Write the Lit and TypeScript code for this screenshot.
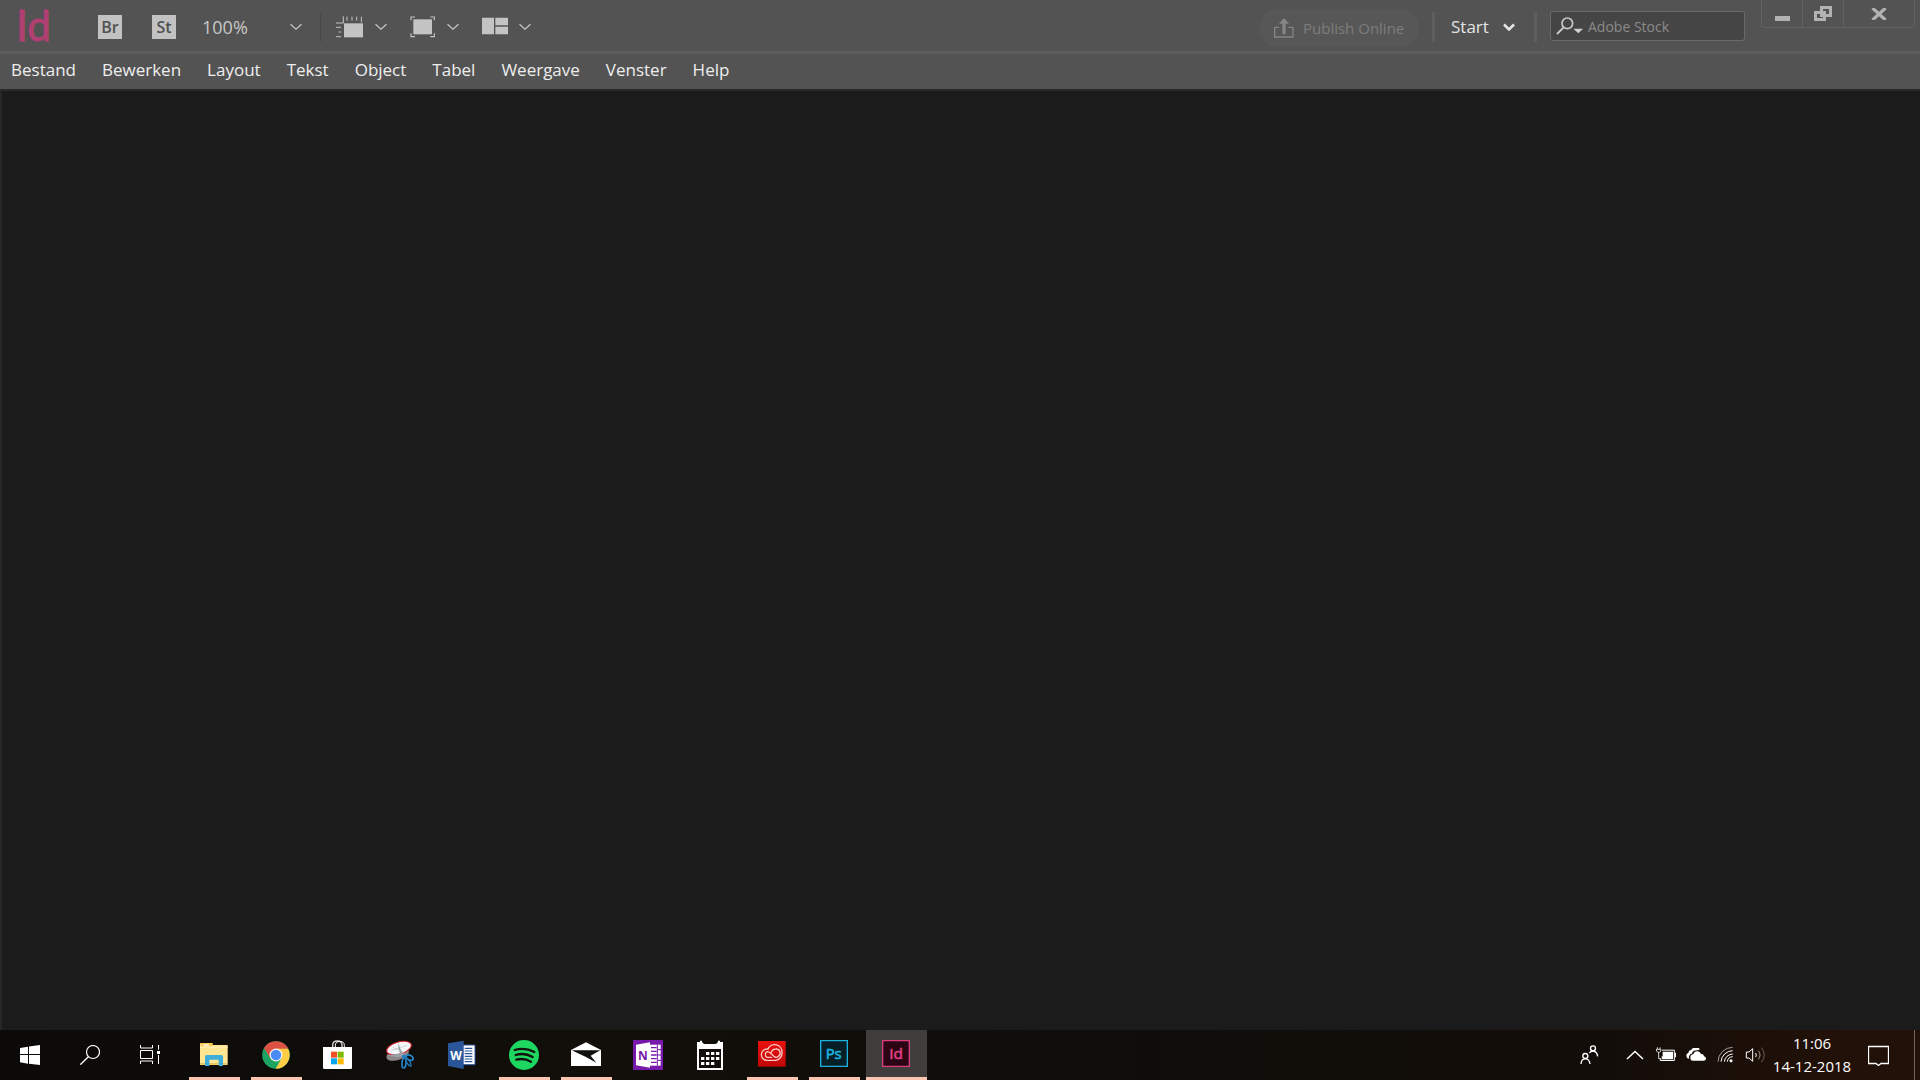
import { LitElement, html, svg, css, type SVGTemplateResult } from "lit";
import { customElement, property } from "lit/decorators.js";
import { classMap } from "lit/directives/class-map.js";

interface TaskItem {
  label: string;
  running?: boolean;
  active?: boolean;
  box: string;
  art: SVGTemplateResult;
}

const MENUS = ["Bestand", "Bewerken", "Layout", "Tekst", "Object", "Tabel", "Weergave", "Venster", "Help"];

const chevron = html`<svg class="chevron" width="14" height="8" viewBox="0 0 14 8" aria-hidden="true">
  <path d="M1.5 1.2L7 6.2L12.5 1.2" fill="none" stroke="#c4c4c4" stroke-width="1.3" />
</svg>`;

const TASKS: TaskItem[] = [
  {
    label: "Verkenner",
    running: true,
    box: "597 60 90 90",
    art: svg`<path d="M600 72q0-3 3-3h34v6h46v56h-83z" fill="#ffe693"/>
      <path d="M603 69h36l-4 10h-32z" fill="#f7c948"/><path d="M610 73h17v4h-17z" fill="#fff"/>
      <path d="M600 80h83v3h-83z" fill="#fff0b8"/>
      <path d="M600 130h83v5h-83z" fill="#f5cf66"/>
      <path d="M615 138v-28q0-5 5-5h44q5 0 5 5v28h-13v-19h-28v19z" fill="#3daedb"/>`,
  },
  {
    label: "Google Chrome",
    running: true,
    box: "783 60 90 90",
    art: svg`<circle cx="828" cy="105" r="41.5" fill="#1da462"/>
      <path d="M828 105L792 84.3A41.5 41.5 0 0 1 864 84.3z" fill="#dd5144"/>
      <path d="M792 84.3L811 115L828 86z" fill="#dd5144"/>
      <path d="M828 86H864.5A41.5 41.5 0 0 1 827 146.500L845 114z" fill="#ffcd46"/>
      <circle cx="828" cy="105" r="19.5" fill="#f3f3f3"/><circle cx="828" cy="105" r="15.5" fill="#4a8af4"/>`,
  },
  {
    label: "Microsoft Store",
    box: "69 60 90 90",
    art: svg`<path d="M98 82v-7q0-12 14-12t14 12v7" fill="none" stroke="#d8d8d8" stroke-width="4"/>
      <path d="M106 82v-6q0-10 13-12q14 0 14 12v6" fill="none" stroke="#fff" stroke-width="3"/>
      <path d="M69 81h87v62q0 4-4 4h-79q-4 0-4-4z" fill="#fff"/>
      <path d="M93 95h18v18h-18z" fill="#f25022"/><path d="M113 95h18v18h-18z" fill="#7fba00"/>
      <path d="M93 115h18v18h-18z" fill="#00a4ef"/><path d="M113 115h18v18h-18z" fill="#ffb900"/>`,
  },
  {
    label: "Knipprogramma",
    box: "255 60 90 90",
    art: svg`<ellipse cx="293" cy="103" rx="35" ry="17" transform="rotate(-18 293 103)" fill="#8d8588"/>
      <ellipse cx="297" cy="84" rx="38" ry="18" transform="rotate(-16 297 84)" fill="#f5f6f8" stroke="#d9242b" stroke-width="3"/>
      <path d="M275 91L321 76M278 82L312 97" stroke="#bcc3ca" stroke-width="2"/>
      <path d="M294 70L311 108L304 110L296 88zM262 106L309 100L313 107L292 112z" fill="#9aa2a9"/>
      <path d="M306 109L320 109" stroke="#1c7fc0" stroke-width="7"/>
      <ellipse cx="329" cy="113" rx="11" ry="7" transform="rotate(28 329 113)" fill="none" stroke="#2389cf" stroke-width="5"/>
      <ellipse cx="312" cy="129" rx="6" ry="15" transform="rotate(6 312 129)" fill="none" stroke="#2389cf" stroke-width="5"/>
      <path d="M317 113Q334 124 333 138Q322 138 315 114" fill="none" stroke="#1e78b8" stroke-width="4"/>`,
  },
  {
    label: "Word",
    box: "441 60 90 90",
    art: svg`<path d="M488 75h37v59h-37z" fill="#fff" stroke="#2b579a" stroke-width="3"/>
      <path d="M494 85h23M494 93h23M494 101h23M494 109h23M494 117h23M494 125h23" stroke="#2b579a" stroke-width="3.5"/>
      <path d="M444 70L491 62V147L444 138z" fill="#2b579a"/>
      <text x="468" y="119" text-anchor="middle" font-size="36" font-weight="700" font-family="Open Sans, sans-serif" fill="#fff">W</text>`,
  },
  {
    label: "Spotify",
    running: true,
    box: "627 60 90 90",
    art: svg`<circle cx="672" cy="105" r="45" fill="#1ed760"/>
      <path d="M644 90Q675 81 703 96M647 105Q674 97 698 111M649 119Q673 113 693 125" fill="none" stroke="#12110c" stroke-width="7" stroke-linecap="round"/>`,
  },
  {
    label: "Mail",
    running: true,
    box: "813 60 90 90",
    art: svg`<path d="M813 90L858 67L903 90V138H813z" fill="#fff"/>
      <path d="M815 91H901L872 107L889 128L858 111z" fill="#100f0b"/>`,
  },
  {
    label: "OneNote",
    box: "69 60 90 90",
    art: svg`<path d="M69 60h90v90h-90z" fill="#7719aa"/>
      <path d="M119 74h33v63h-33z" fill="#fff"/>
      <path d="M123 83h17M123 94h17M123 105h17M123 116h17M123 127h17" stroke="#7719aa" stroke-width="4"/>
      <path d="M142 74v63M142 89h11M142 105h11M142 121h11" stroke="#7719aa" stroke-width="3"/>
      <path d="M78 74L120 67V143L78 136z" fill="#fff"/>
      <text x="99" y="119" text-anchor="middle" font-size="36" font-weight="700" font-family="Open Sans, sans-serif" fill="#7719aa">N</text>`,
  },
  {
    label: "Agenda",
    box: "255 60 90 90",
    art: svg`<path d="M261 66h9v-4h6v4l6 6h36l6-6v-4h6v4h9v84h-78zM267 87v57h66v-57z" fill="#fff" fill-rule="evenodd"/>
      <path d="M288 96h10v9h-10zM303 96h10v9h-10zM318 96h10v9h-10zM273 111h10v9h-10zM288 111h10v9h-10zM303 111h10v9h-10zM318 111h10v9h-10zM273 126h10v9h-10zM288 126h10v9h-10zM303 126h10v9h-10z" fill="#fff"/>`,
  },
  {
    label: "Creative Cloud",
    running: true,
    box: "441 60 90 90",
    art: svg`<defs><linearGradient id="cc" x1="0" y1="0" x2="0" y2="1"><stop offset="0" stop-color="#e8100c"/><stop offset="1" stop-color="#c00508"/></linearGradient></defs>
      <path d="M444 63h83v77h-83z" fill="url(#cc)"/>
      <g fill="none" stroke="#ffc9c4" stroke-width="4" stroke-linecap="round">
      <path d="M498 121H471A17 17 0 0 1 471 87H474A22 22 0 0 1 516 97A22 22 0 0 1 496 121"/>
      <path d="M485 112H472A9 9 0 0 1 472 95Q477 95 481 99L493 110Q500 115 505 109A12 12 0 0 0 498 87Q487 87 484 97"/>
      </g>`,
  },
  {
    label: "Photoshop",
    running: true,
    box: "627 60 90 90",
    art: svg`<path d="M632 62h80v77h-80z" fill="#061e26" stroke="#1bb0dd" stroke-width="4"/>
      <text x="671" y="117" text-anchor="middle" font-size="44" font-family="Open Sans, sans-serif" fill="#1bb0dd" stroke="#1bb0dd" stroke-width="2">Ps</text>`,
  },
  {
    label: "InDesign",
    running: true,
    active: true,
    box: "813 60 90 90",
    art: svg`<path d="M818 62h80v77h-80z" fill="#2b0514" stroke="#dc3f7f" stroke-width="4"/>
      <text x="858" y="117" text-anchor="middle" font-size="46" font-family="Open Sans, sans-serif" fill="#dc3f7f" stroke="#dc3f7f" stroke-width="2">Id</text>`,
  },
];

@customElement("app-toolbar")
export class AppToolbar extends LitElement {
  static styles = css`
    :host { display: flex; height: 51px; color: #d2d2d2; font-family: "Open Sans", "Noto Sans", sans-serif; }
    button { appearance: none; border: 0; background: none; padding: 0; margin: 0; font: inherit; color: inherit; display: flex; align-items: center; }
    svg { display: block; flex: none; }
    .left { display: flex; align-items: center; flex: 1; padding: 3px 0 0 16px; }
    .logo { width: 82px; font: 42px/44px "Lato", sans-serif; color: #b03f72; -webkit-text-stroke: 1px #b03f72; margin: 0 0 4px; }
    .badge { width: 24px; height: 24px; background: #c2c2c2; color: #515151; font-size: 16px; line-height: 24px; font-weight: 600; justify-content: center; margin-right: 30px; }
    .drop { display: grid; align-items: center; }
    .drop > * { grid-area: 1 / 1; }
    .drop > .chevron, .drop > svg { justify-self: end; pointer-events: none; }
    select { appearance: none; border: 0; background: transparent; color: inherit; font: inherit; padding: 0; margin: 0; width: 100%; }
    .zoom { width: 101px; font-size: 18px; color: #c8c8c8; margin-left: -4px; }
    .rule { width: 1px; height: 30px; background: #4a4a4a; margin: 0 15px 0 17px; }
    .tool { gap: 10px; margin-right: 22px; }
    .right { display: flex; align-items: flex-start; }
    .publish { height: 38px; margin-top: 9px; width: 160px; border-radius: 19px; background: #575757; color: #7d7d7d; font-size: 15px; gap: 9px; padding-left: 15px; box-sizing: border-box; white-space: nowrap; }
    .bar { width: 3px; height: 30px; background: #5e5e5e; margin: 12px 0 0 13px; }
    .start { width: 64px; height: 28px; margin: 12px 3px 0 16px; font-size: 17px; color: #e4e4e4; }
    .bar.second { margin-left: 16px; }
    .search { display: flex; align-items: center; box-sizing: border-box; width: 195px; height: 30px; margin: 11px 16px 0 13px; border: 1px solid #6a6a6a; border-radius: 3px; background: #454545; padding-left: 5px; gap: 4px; }
    input { flex: 1; min-width: 0; border: 0; outline: 0; background: none; color: #ddd; font: 14px "Open Sans", sans-serif; padding: 0; }
    input::placeholder { color: #8b8b8b; opacity: 1; }
    .window { display: flex; height: 28px; box-sizing: border-box; border: 1px solid #626262; border-top: 0; border-radius: 0 0 4px 4px; margin-right: 5px; }
    .window button { width: 41px; justify-content: center; border-right: 1px solid #626262; box-sizing: border-box; }
    .window button.close { width: 70px; border: 0; }
  `;

  render() {
    return html`
      <div class="left">
        <h1 class="logo">Id</h1>
        <button class="badge" aria-label="Bridge">Br</button>
        <button class="badge" aria-label="Stock">St</button>
        <div class="drop zoom">
          <select aria-label="Zoompercentage"><option>100%</option></select>
          ${chevron}
        </div>
        <span class="rule"></span>
        <button class="tool" aria-label="Weergaveopties">
          <svg width="28" height="22" viewBox="108 50 84 66"><path d="M132 72h57v42h-57z" fill="#c4c4c4" /><path d="M108 71h22V51M141 52v12M156 52v12M170 52v12M184 52v17M108 84h15M116 98h8M108 112h15" fill="none" stroke="#c4c4c4" stroke-width="3" /></svg>
          ${chevron}
        </button>
        <button class="tool" aria-label="Schermmodus">
          <svg width="26" height="22" viewBox="327 50 78 66"><path d="M337 60h56v45h-56z" fill="#c4c4c4" /><path d="M330 63V53h12M388 53h12v10M400 102v10h-12M342 112h-12v-10" fill="none" stroke="#c4c4c4" stroke-width="3.5" /></svg>
          ${chevron}
        </button>
        <button class="tool" aria-label="Documenten schikken">
          <svg width="26" height="22" viewBox="540 50 78 66"><path d="M540 55h36v50h-36zM580 55h38v23h-38zM580 82h38v23h-38z" fill="#c4c4c4" /></svg>
          ${chevron}
        </button>
      </div>
      <div class="right">
        <button class="publish">
          <svg width="20" height="20" viewBox="104 52 60 60"><path d="M120 80h-14v29h55v-29h-14" fill="none" stroke="#858585" stroke-width="4" /><path d="M134 52l15 17h-10v32h-10V69h-10z" fill="#858585" /></svg>
          Publish Online
        </button>
        <span class="bar"></span>
        <div class="drop start">
          <select aria-label="Werkruimte"><option>Start</option></select>
          <svg width="12" height="9" viewBox="0 0 12 9"><path d="M1 2.500L6 7.500L11 2.500" fill="none" stroke="#e6e6e6" stroke-width="2.5" /></svg>
        </div>
        <span class="bar second"></span>
        <label class="search">
          <svg width="28" height="20" viewBox="78 48 84 60"><circle cx="112" cy="70" r="16" fill="none" stroke="#c8c8c8" stroke-width="5" /><path d="M101 82L81 102" stroke="#c8c8c8" stroke-width="6" /><path d="M130 86h29l-14 14z" fill="#d0d0d0" /></svg>
          <input type="search" placeholder="Adobe Stock" aria-label="Adobe Stock" />
        </label>
        <div class="window">
          <button aria-label="Minimaliseren"><svg width="15" height="20" viewBox="0 0 15 20"><path d="M0 12h15v5H0z" fill="#b2b2b2" /></svg></button>
          <button aria-label="Verkleinen"><svg width="18" height="16" viewBox="0 0 18 16"><path d="M7.5 1.5h9v8h-9zM1.5 6.5h9v7h-9z" fill="#535353" stroke="#b2b2b2" stroke-width="3" /><path d="M9 6v2M6 8h3" stroke="#b2b2b2" stroke-width="1" /></svg></button>
          <button class="close" aria-label="Sluiten"><svg width="16" height="12" viewBox="0 0 16 12"><path d="M1.5 0L14.5 12M14.5 0L1.5 12" stroke="#b2b2b2" stroke-width="3.2" /></svg></button>
        </div>
      </div>
    `;
  }
}

@customElement("app-menubar")
export class AppMenubar extends LitElement {
  static styles = css`
    :host { display: block; height: 35px; border-top: 3px solid #5d5d5d; font-family: "Open Sans", "Noto Sans", sans-serif; }
    nav { display: flex; height: 32px; margin-left: -2px; }
    button { appearance: none; border: 0; background: none; margin: 0; padding: 0 13px; font: inherit; font-size: 17px; line-height: 32px; color: #eee; }
  `;

  render() {
    return html`<nav aria-label="Menu">${MENUS.map((name) => html`<button>${name}</button>`)}</nav>`;
  }
}

@customElement("task-button")
export class TaskButton extends LitElement {
  @property({ attribute: false }) item!: TaskItem;

  static styles = css`
    :host { display: flex; width: 62px; }
    button { appearance: none; flex: 1; display: grid; place-items: center; position: relative; border: 0; padding: 0 1px 0 0; margin: 0 0 0 1px; background: none; }
    svg { display: block; }
    .active { background: #3f3e3d; }
    .mark { position: absolute; bottom: 0; left: 5px; right: 5px; height: 3px; background: #fbc5b2; }
    .active .mark { left: 0; right: 0; }
  `;

  render() {
    const { label, box, art, running, active } = this.item;
    return html`<button aria-label=${label} class=${classMap({ active: !!active })}>
      <svg width="30" height="30" viewBox=${box}>${art}</svg>
      ${running ? html`<span class="mark"></span>` : null}
    </button>`;
  }
}

@customElement("app-taskbar")
export class AppTaskbar extends LitElement {
  static styles = css`
    :host { display: flex; height: 50px; background: linear-gradient(90deg, #0b0a09 0%, #120f0a 30%, #0f0d0a 60%, #130d09 84%, #221108 96%, #221108 100%); font-family: "Open Sans", "Noto Sans", sans-serif; color: #fff; }
    button { appearance: none; border: 0; padding: 0; margin: 0; background: none; font: inherit; color: inherit; display: grid; place-items: center; }
    svg { display: block; }
    .system { width: 60px; }
    .apps { display: flex; flex: 1; padding-left: 3px; }
    .tray { display: flex; }
    .people { width: 58px; }
    .small { width: 30px; }
    .caret { width: 32px; }
    .clock { width: 82px; font-size: 15px; line-height: 23px; align-content: center; text-align: center; white-space: nowrap; }
    .notify { width: 40px; margin-left: 5px; }
    .desktop { width: 6px; margin-left: 16px; border-left: 1px solid #6f655f; }
  `;

  render() {
    return html`
      <button class="system" aria-label="Start">
        <svg width="20" height="20" viewBox="60 75 60 60"><path d="M60 84L84 80V102H60zM87 79.500L120 75V102H87zM60 105H84V131L60 127zM87 105H120V135L87 131z" fill="#fff" /></svg>
      </button>
      <button class="system" aria-label="Zoeken">
        <svg width="20" height="20" viewBox="240 75 60 60"><circle cx="279" cy="96" r="19.5" fill="none" stroke="#fff" stroke-width="3.5" /><path d="M265 110L241 134" stroke="#fff" stroke-width="4" /></svg>
      </button>
      <button class="system" aria-label="Taakweergave">
        <svg width="20" height="20" viewBox="420 75 60 60"><path d="M421.500 75v9h36v-9M421.500 132v-9h36v9M421.500 91.500h36v24h-36zM475.500 75v14M475.500 105v27" fill="none" stroke="#fff" stroke-width="3" /><path d="M471 93h9v9h-9z" fill="#fff" /></svg>
      </button>
      <div class="apps">${TASKS.map((item) => html`<task-button .item=${item}></task-button>`)}</div>
      <div class="tray">
        <button class="people" aria-label="Personen">
          <svg width="20" height="20" viewBox="62 74 60 60"><g fill="none" stroke="#fff" stroke-width="4"><circle cx="101" cy="84" r="7.5" /><circle cx="78" cy="107" r="7.5" /><path d="M65 131q1-15 13-16q12 1 14 16M90 98q4-6 11-6q12 1 14 16" /></g></svg>
        </button>
        <button class="caret" aria-label="Verborgen pictogrammen">
          <svg width="18" height="10" viewBox="0 0 18 10"><path d="M1 9L9 1.500L17 9" fill="none" stroke="#fff" stroke-width="1.5" /></svg>
        </button>
        <button class="small" aria-label="Batterij">
          <svg width="20" height="16" viewBox="285 82 60 48"><path d="M303 91.500h37v31h-42v-6" fill="none" stroke="#fff" stroke-width="3" /><path d="M305 96h31v23h-34v-9h3zM341 99h4v14h-4z" fill="#fff" /><path d="M289 83v5M297 83v5M286.500 89h13v5l-4 4h-5l-4-4zM293 99v18h6" fill="none" stroke="#fff" stroke-width="2.5" /></svg>
        </button>
        <button class="small" aria-label="OneDrive">
          <svg width="20" height="14" viewBox="375 84 60 42"><path d="M384 117a10 10 0 0 1-2-19a10 10 0 0 1 9-9a16 16 0 0 1 26-1l-7 3q-14-1-18 10q-10 3-8 16z" fill="#fff" /><path d="M396 122q-8 0-8-9q0-9 9-10q3-10 13-9q7 0 10 8q8-1 9 7q7 2 6 8q-1 5-7 5z" fill="#fff" /></svg>
        </button>
        <button class="small" aria-label="Netwerk">
          <svg width="18" height="18" viewBox="472 81 54 54"><path d="M475 128A44 44 0 0 1 519 85" fill="none" stroke="#a59e9a" stroke-width="3" /><path d="M484 128A36 36 0 0 1 519 95M494 128A26 26 0 0 1 519 105M503 128A17 17 0 0 1 519 113" fill="none" stroke="#fff" stroke-width="3" /><circle cx="514" cy="125" r="4.5" fill="#fff" /></svg>
        </button>
        <button class="small" aria-label="Volume">
          <svg width="22" height="18" viewBox="553 78 66 54"><path d="M557 96h8l11-10v38l-11-10h-8z" fill="none" stroke="#fff" stroke-width="3" /><path d="M585 99q4 6 0 12" fill="none" stroke="#fff" stroke-width="3" /><path d="M593 92q10 13 0 26" fill="none" stroke="#a19893" stroke-width="3" /><path d="M602 83q18 22 0 44" fill="none" stroke="#655b55" stroke-width="3" /></svg>
        </button>
        <button class="clock"><span>11:06</span><span>14-12-2018</span></button>
        <button class="notify" aria-label="Meldingen">
          <svg width="21" height="21" viewBox="0 0 21 21"><path d="M.5 1.500h20v17H13L10.500 20.500L8 18.500H.5z" fill="none" stroke="#fff" stroke-width="1.3" /></svg>
        </button>
        <button class="desktop" aria-label="Bureaublad weergeven"></button>
      </div>
    `;
  }
}

@customElement("app-root")
export class AppRoot extends LitElement {
  static styles = css`
    :host { display: flex; flex-direction: column; min-height: 100vh; background: #535353; }
    main { flex: 1; background: #1b1b1b; border-top: 2px solid #2a2a2a; border-left: 2px solid #262626; }
  `;

  render() {
    return html`
      <app-toolbar></app-toolbar>
      <app-menubar></app-menubar>
      <main></main>
      <app-taskbar></app-taskbar>
    `;
  }
}
